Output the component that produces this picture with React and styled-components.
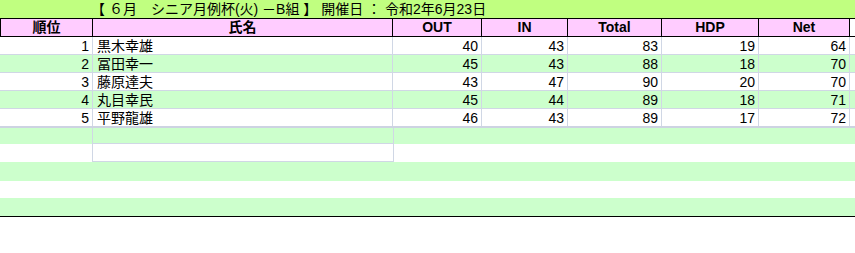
import React from 'react';
import styled, { createGlobalStyle } from 'styled-components';

const GlobalStyle = createGlobalStyle`
  html, body {
    margin: 0;
    padding: 0;
    background: #fff;
  }
  body {
    font-family: "Liberation Sans", "Noto Sans CJK JP", sans-serif;
    color: #000;
  }
`

const COLS = '93px 300px 89px 86px 94px 97px 91px 1fr';

const Sheet = styled.div`
  width: 855px;
  display: flex;
  flex-direction: column;
`

const TitleBar = styled.div`
  height: 18px;
  box-sizing: border-box;
  background: #c0ff80;
  padding-left: 91px;
  font-size: 14px;
  line-height: 17px;
  padding-top: 1px;
  white-space: pre;
`

const HeaderRow = styled.div`
  display: grid;
  grid-template-columns: ${COLS};
  height: 19px;
  box-sizing: border-box;
  border-top: 1px solid #000;
  border-bottom: 1px solid #000;
`

const HeadCell = styled.div`
  box-sizing: border-box;
  background: ${p => (p.$filler ? '#fff' : '#ffccff')};
  border-left: ${p => (p.$first ? '1px solid #000' : 'none')};
  border-right: ${p => (p.$filler ? 'none' : '1px solid #000')};
  font-weight: bold;
  font-size: 14px;
  line-height: 17px;
  text-align: center;
  overflow: hidden;
`

const DataRow = styled.div`
  display: grid;
  grid-template-columns: ${COLS};
  height: ${p => p.$h || 18}px;
  box-sizing: border-box;
  background: ${p => (p.$green ? '#ccffcc' : '#fff')};
  border-bottom: ${p => p.$rule || 'none'};
`

const Cell = styled.div`
  box-sizing: border-box;
  border-right: ${p => (p.$last ? 'none' : '1px solid #d0d7e5')};
  font-size: 14px;
  line-height: 17px;
  padding: 1px 3px 0 4px;
  text-align: ${p => (p.$num ? 'right' : 'left')};
  white-space: nowrap;
  overflow: hidden;
`

const BlankCell = styled.div`
  box-sizing: border-box;
  border-left: ${p => (p.$boxed ? '1px solid #d0d7e5' : 'none')};
  border-right: ${p => (p.$boxed ? '1px solid #d0d7e5' : 'none')};
  border-bottom: ${p => (p.$boxed ? '1px solid #d0d7e5' : 'none')};
  margin-left: ${p => (p.$boxed ? '-1px' : '0')};
  margin-right: ${p => (p.$boxed ? '-1px' : '0')};
`

const BottomRule = styled.div`
  height: 1px;
  background: #000;
`

const headers = ['順位', '氏名', 'OUT', 'IN', 'Total', 'HDP', 'Net'];

const results = [
  { rank: 1, name: '黒木幸雄', out: 40, in: 43, total: 83, hdp: 19, net: 64 },
  { rank: 2, name: '冨田幸一', out: 45, in: 43, total: 88, hdp: 18, net: 70 },
  { rank: 3, name: '藤原達夫', out: 43, in: 47, total: 90, hdp: 20, net: 70 },
  { rank: 4, name: '丸目幸民', out: 45, in: 44, total: 89, hdp: 18, net: 71 },
  { rank: 5, name: '平野龍雄', out: 46, in: 43, total: 89, hdp: 17, net: 72 },
];

const blanks = [
  { h: 16, green: true, boxed: true },
  { h: 18, green: false, boxed: true },
  { h: 19, green: true },
  { h: 17, green: false },
  { h: 18, green: true },
];

const App = () => (
  <Sheet>
    <GlobalStyle />
    <TitleBar>{'【 ６月　シニア月例杯(火) －B組 】 開催日 ： 令和2年6月23日'}</TitleBar>
    <HeaderRow>
      {headers.map((h, i) => (
        <HeadCell key={h} $first={i === 0}>{h}</HeadCell>
      ))}
      <HeadCell $filler />
    </HeaderRow>
    {results.map((r, i) => (
      <DataRow
        key={r.rank}
        $green={i % 2 === 1}
        $h={i === results.length - 1 ? 19 : 18}
        $rule={i === results.length - 1 ? '2px solid #cdd3e2' : '1px solid #d0d7e5'}
      >
        <Cell $num>{r.rank}</Cell>
        <Cell>{r.name}</Cell>
        <Cell $num>{r.out}</Cell>
        <Cell $num>{r.in}</Cell>
        <Cell $num>{r.total}</Cell>
        <Cell $num>{r.hdp}</Cell>
        <Cell $num>{r.net}</Cell>
        <Cell $last />
      </DataRow>
    ))}
    {blanks.map((b, i) => (
      <DataRow key={i} $green={b.green} $h={b.h}>
        <BlankCell />
        <BlankCell $boxed={b.boxed} />
      </DataRow>
    ))}
    <BottomRule />
  </Sheet>
);

export default App;
